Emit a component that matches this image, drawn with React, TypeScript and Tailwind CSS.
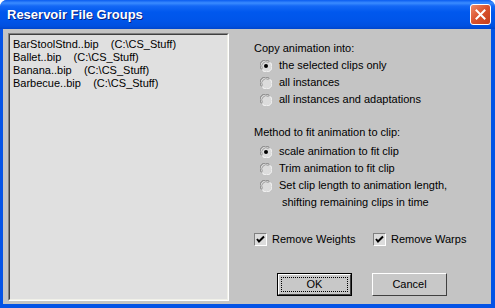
import { FC, ReactNode } from "react";

const items = [
    ["BarStoolStnd..bip", "(C:\\CS_Stuff)"],
    ["Ballet..bip", "(C:\\CS_Stuff)"],
    ["Banana..bip", "(C:\\CS_Stuff)"],
    ["Barbecue..bip", "(C:\\CS_Stuff)"],
];

const Radio: FC<{ checked?: boolean }> = ({ checked }) => (
    <svg width="12" height="12" viewBox="0 0 12 12" className="shrink-0">
        <circle cx="6" cy="6" r="5.5" fill="#dcdcdc" />
        <path d="M1.6 9.4 A5.5 5.5 0 0 1 9.4 1.6" stroke="#7a7a7a" strokeWidth="1" fill="none" />
        <path d="M2.6 8.6 A4.3 4.3 0 0 1 8.6 2.6" stroke="#a0a0a0" strokeWidth="1" fill="none" />
        <path d="M10.4 2.6 A5.5 5.5 0 0 1 2.6 10.4" stroke="#ffffff" strokeWidth="1" fill="none" />
        {checked && <circle cx="6" cy="6" r="2" fill="#000" />}
    </svg>
);

const RadioRow: FC<{ checked?: boolean; children: ReactNode }> = ({ checked, children }) => (
    <div className="flex items-start pl-[6px]">
        <div className="h-[17px] flex items-center">
            <Radio checked={checked} />
        </div>
        <div className="pl-[7px] leading-[17px]">{children}</div>
    </div>
);

const Checkbox: FC = () => (
    <div className="w-[13px] h-[13px] bg-[#dcdcdc] border border-t-[#808080] border-l-[#808080] border-r-white border-b-white flex items-center justify-center shrink-0">
        <svg width="9" height="9" viewBox="0 0 9 9">
            <path d="M1 4 L3 6.5 L8 1.5" stroke="#000" strokeWidth="2" fill="none" />
        </svg>
    </div>
);

const Button: FC<{ label: string; primary?: boolean }> = ({ label, primary }) => (
    <div className={`w-[75px] h-[23px] ${primary ? "border border-black" : ""}`}>
        <div className="w-full h-full bg-[#c8c8c8] border border-t-white border-l-white border-r-[#404040] border-b-[#404040] flex items-center justify-center">
            <div className={`w-[calc(100%-6px)] h-[calc(100%-6px)] flex items-center justify-center ${primary ? "outline outline-1 outline-dotted outline-black" : ""}`}>
                {label}
            </div>
        </div>
    </div>
);

export default function App() {
    return (
        <div className="w-[495px] h-[308px] bg-white" style={{ fontFamily: '"Liberation Sans", Arial, sans-serif' }}>
            <div className="w-full h-full flex flex-col rounded-t-[7px] overflow-hidden bg-[#0453e6]">
                <div className="h-[29px] shrink-0 flex items-center justify-between pl-[7px] pr-[4px] bg-[linear-gradient(to_bottom,#0a5cf0_0px,#3b8cff_3px,#1468f5_6px,#0058ee_12px,#0055ea_20px,#0050e0_26px,#0045cc_29px)]">
                    <span className="text-white font-bold text-[13px] [text-shadow:1px_1px_0_#0a1f7a]">Reservoir File Groups</span>
                    <div className="w-[21px] h-[21px] rounded-[3px] border border-white bg-[linear-gradient(135deg,#f08a68,#d9512c_50%,#c43d1b)] flex items-center justify-center">
                        <svg width="11" height="11" viewBox="0 0 11 11">
                            <path d="M1.5 1.5 L9.5 9.5 M9.5 1.5 L1.5 9.5" stroke="#fff" strokeWidth="2" strokeLinecap="square" />
                        </svg>
                    </div>
                </div>
                <div className="flex-1 flex mx-[3px] mr-[4px] mb-[4px] bg-[#c4c4c4] text-[11px] text-black">
                    <div className="mt-[4px] mb-[3px] ml-[5px] w-[221px] border border-t-[#808080] border-l-[#808080] border-r-white border-b-white">
                        <div className="w-full h-full bg-[#e0e0e0] border border-t-[#404040] border-l-[#404040] border-r-[#f0f0e8] border-b-[#f0f0e8] pt-[3px] pl-[3px]">
                            {items.map(([name, path]) => (
                                <div key={name} className="leading-[13px] whitespace-pre">
                                    {name}
                                    {"    "}
                                    {path}
                                </div>
                            ))}
                        </div>
                    </div>
                    <div className="flex flex-col pl-[25px] pt-[11px]">
                        <div className="leading-[17px]">Copy animation into:</div>
                        <RadioRow checked>the selected clips only</RadioRow>
                        <RadioRow>all instances</RadioRow>
                        <RadioRow>all instances and adaptations</RadioRow>
                        <div className="leading-[17px] mt-[16px]">Method to fit animation to clip:</div>
                        <div className="mt-[2px]">
                            <RadioRow checked>scale animation to fit clip</RadioRow>
                            <RadioRow>Trim animation to fit clip</RadioRow>
                            <RadioRow>
                                Set clip length to animation length,
                                <br />
                                <span className="pl-[3px]">shifting remaining clips in time</span>
                            </RadioRow>
                        </div>
                        <div className="flex items-center mt-[20px] h-[17px]">
                            <Checkbox />
                            <span className="pl-[5px] w-[106px]">Remove Weights</span>
                            <Checkbox />
                            <span className="pl-[5px]">Remove Warps</span>
                        </div>
                        <div className="flex gap-[20px] mt-[25px] pl-[23px]">
                            <Button label="OK" primary />
                            <Button label="Cancel" />
                        </div>
                    </div>
                </div>
            </div>
        </div>
    );
}
